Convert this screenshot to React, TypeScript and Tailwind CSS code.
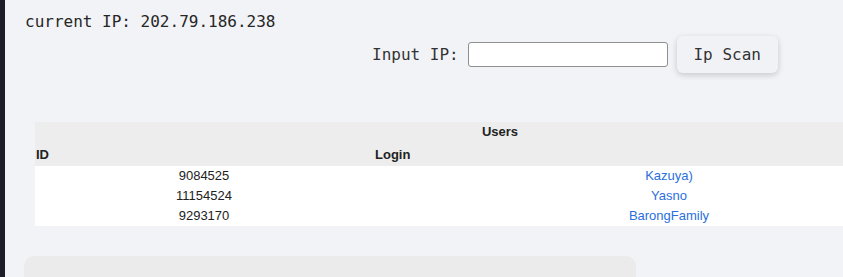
const users = [
  { id: '9084525', login: 'Kazuya)' },
  { id: '11154524', login: 'Yasno' },
  { id: '9293170', login: 'BarongFamily' },
];

const App = () => {
  return (
    <div className="flex w-[843px] h-[277px] overflow-hidden bg-[#f2f3f7]">
      <div className="w-[5px] shrink-0 bg-[#1c1d29]"></div>
      <main className="flex-1 min-w-0">
        <p className="pl-[20px] pt-[12px] text-[16px] leading-[20px] text-[#262626] font-['DejaVu_Sans_Mono',monospace]">
          current IP: 202.79.186.238
        </p>
        <div className="flex items-center pl-[367px] pt-[4px] font-['DejaVu_Sans_Mono',monospace] text-[16px] text-[#333]">
          <label htmlFor="ip" className="mr-[9px]">Input IP:</label>
          <input
            id="ip"
            className="w-[200px] h-[25px] bg-white border border-[#8f8f8f] rounded-[3px] outline-none"
          />
          <button className="ml-[9px] h-[37px] w-[101px] rounded-md bg-[#f1f2f6] shadow-[0_2px_6px_rgba(0,0,0,0.18)] text-[#333]">
            Ip Scan
          </button>
        </div>
        <table className="mt-[49px] ml-[30px] w-[930px] border-collapse text-[13px] font-['Liberation_Sans',Arial,sans-serif] text-[#222]">
          <thead className="bg-[#ededed]">
            <tr className="h-[22px]">
              <th colSpan={2} className="text-center font-bold align-top">Users</th>
            </tr>
            <tr className="h-[22px]">
              <th className="text-left font-bold w-[338px] pl-[1px]">ID</th>
              <th className="text-left font-bold pl-[2px]">Login</th>
            </tr>
          </thead>
          <tbody className="bg-white">
            {users.map((u) => (
              <tr key={u.id} className="h-[20px]">
                <td className="text-center">{u.id}</td>
                <td className="text-center">
                  <a href="#" className="text-[#2a6fdc]">{u.login}</a>
                </td>
              </tr>
            ))}
          </tbody>
        </table>
        <div className="mt-[30px] ml-[19px] w-[612px] h-[40px] rounded-t-[10px] bg-[#ebebeb]"></div>
      </main>
    </div>
  );
};

export default App;
